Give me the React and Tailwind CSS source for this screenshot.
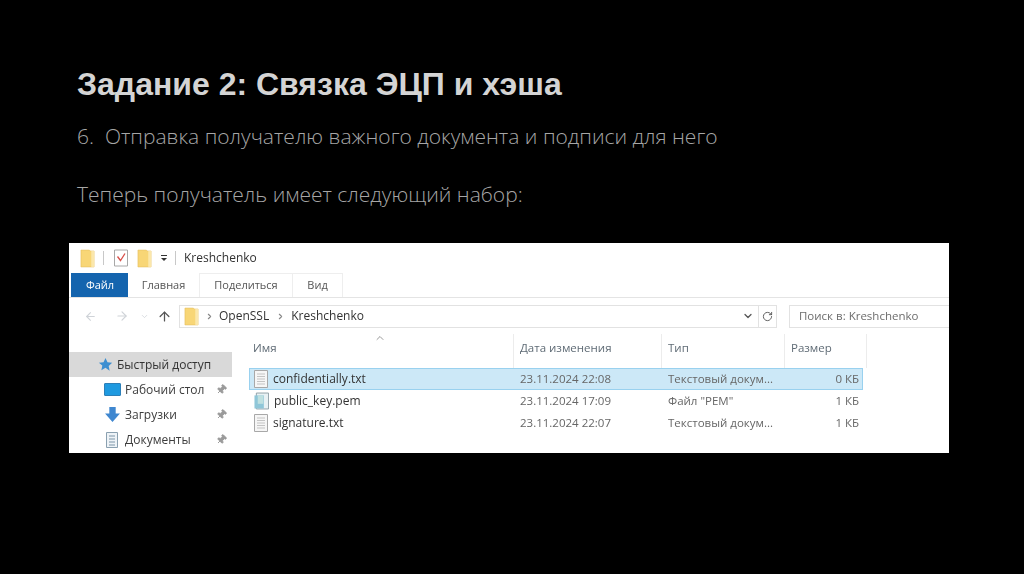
import { ArrowLeft, ArrowRight, ArrowUp, ChevronDown, ChevronRight, ChevronUp, RotateCw, Pin } from "lucide-react";

const sans = "font-['Open_Sans','Noto_Sans',sans-serif]";

function Folder({ className }) {
  return (
    <svg viewBox="0 0 16 20" className={className}>
      <path d="M1 1h9l1 1h4v17H1z" fill="#f8d676" stroke="#e4bd5c" strokeWidth="0.6" />
      <path d="M12 2h3v17h-3z" fill="#fbe7ab" />
    </svg>
  );
}

function TextFile() {
  return (
    <svg viewBox="0 0 14 18" className="h-[18px] w-[14px] shrink-0">
      <path d="M0.5 0.5h13v17h-13z" fill="#f6f6f6" stroke="#a8a8a8" />
      <path d="M3 4h8M3 6.5h8M3 9h8M3 11.5h8M3 14h8" stroke="#c4c4c4" />
    </svg>
  );
}

function PemFile() {
  return (
    <svg viewBox="0 0 16 18" className="h-[18px] w-[15px] shrink-0">
      <path d="M2.5 0.5h13v17h-13z" fill="#e8f1f4" stroke="#8f9ea5" />
      <path d="M0.5 3h10v14h-10z" fill="#8fc6d8" />
      <path d="M4 3h6v9H4z" fill="#bfe0e0" />
    </svg>
  );
}

const files = [
  { name: "confidentially.txt", date: "23.11.2024 22:08", type: "Текстовый докум...", size: "0 КБ", selected: true },
  { name: "public_key.pem", date: "23.11.2024 17:09", type: 'Файл "PEM"', size: "1 КБ", pem: true },
  { name: "signature.txt", date: "23.11.2024 22:07", type: "Текстовый докум...", size: "1 КБ" },
];

function NavItem({ icon, label }) {
  return (
    <div className="flex h-[25px] items-center pl-[31px] pr-1">
      <span className="flex w-[24px] shrink-0 justify-center">{icon}</span>
      <span className="ml-[1px] flex-1 text-[12px] text-[#3c3c3c]">{label}</span>
      <Pin size={11} className="mr-[1px] rotate-45 fill-[#9a9a9a] text-[#9a9a9a]" />
    </div>
  );
}

export default function App() {
  return (
    <div className={`h-[574px] w-[1024px] overflow-hidden bg-black ${sans}`}>
      <div className="px-[77px] pt-[65px]">
        <h1 className="font-['Liberation_Sans',sans-serif] text-[32px] leading-[38px] font-bold text-[#d4d4d4]">
          Задание 2: Связка ЭЦП и хэша
        </h1>
        <p className="mt-[19px] whitespace-pre text-[21px] leading-[28px] font-light text-[#a6a6a6]">
          6.  Отправка получателю важного документа и подписи для него
        </p>
        <p className="mt-[30px] text-[21px] leading-[28px] font-light text-[#a6a6a6]">
          Теперь получатель имеет следующий набор:
        </p>
      </div>

      <div className="mt-[35px] ml-[69px] h-[210px] w-[880px] overflow-hidden bg-white text-[#444] blur-[0.4px]">
        {/* title bar */}
        <div className="flex h-[30px] items-center pl-[11px]">
          <Folder className="h-[19px] w-[15px]" />
          <span className="ml-[8px] h-[14px] w-px bg-[#c8c8c8]" />
          <svg viewBox="0 0 14 17" className="ml-[10px] h-[18px] w-[14px]">
            <path d="M0.5 0.5h13v16h-13z" fill="#fff" stroke="#a8a8a8" />
            <path d="M3.5 7l3 4 4.5-7" fill="none" stroke="#d8504a" strokeWidth="1.3" />
          </svg>
          <Folder className="ml-[9px] h-[19px] w-[15px]" />
          <span className="ml-[7px] flex w-[10px] flex-col items-center gap-[2px]">
            <span className="h-px w-[6px] bg-[#333]" />
            <span className="h-0 w-0 border-x-[3px] border-t-[3px] border-x-transparent border-t-[#333]" />
          </span>
          <span className="ml-[6px] h-[14px] w-px bg-[#c8c8c8]" />
          <span className="ml-[8px] text-[12px] text-[#333]">Kreshchenko</span>
        </div>

        {/* ribbon tabs */}
        <div className="flex h-[25px] items-stretch border-b border-[#e4e4e4] pl-[2px] text-[11px]">
          <span className="flex w-[57px] items-center justify-center bg-[#1464ae] pl-[1px] text-white">Файл</span>
          <span className="flex w-[71px] items-center justify-center text-[#555]">Главная</span>
          <span className="flex w-[94px] items-center justify-center border-x border-t border-[#eeeeee] text-[#555]">Поделиться</span>
          <span className="flex w-[50px] items-center justify-center border-r border-t border-[#eeeeee] text-[#555]">Вид</span>
        </div>

        {/* address row */}
        <div className="flex h-[36px] items-center">
          <div className="flex w-[110px] shrink-0 items-center pl-[15px]">
            <ArrowLeft size={13} className="text-[#cfd3d8]" />
            <ArrowRight size={14} className="ml-[18px] text-[#cfd3d8]" />
            <ChevronDown size={9} className="ml-[11px] text-[#cfd3d8]" />
            <ArrowUp size={15} className="ml-[8px] text-[#555]" />
          </div>
          <div className="flex h-[23px] w-[598px] shrink-0 items-center border border-[#e2e2e2] pl-[4px]">
            <Folder className="h-[19px] w-[15px]" />
            <ChevronRight size={9} strokeWidth={3} className="ml-[6px] text-[#888]" />
            <span className="ml-[5px] text-[12px] text-[#333]">OpenSSL</span>
            <ChevronRight size={9} strokeWidth={3} className="ml-[7px] text-[#888]" />
            <span className="ml-[6px] text-[12px] text-[#333]">Kreshchenko</span>
            <ChevronDown size={12} strokeWidth={2.5} className="ml-auto mr-[4px] text-[#555]" />
            <span className="flex h-full w-[18px] items-center justify-center border-l border-[#e2e2e2]">
              <RotateCw size={11} className="text-[#555]" />
            </span>
          </div>
          <div className="ml-[12px] flex h-[23px] flex-1 items-center border-y border-l border-[#e2e2e2] pl-[9px] text-[11.5px] text-[#6d6d6d]">
            Поиск в: Kreshchenko
          </div>
        </div>

        {/* body */}
        <div className="flex">
          <div className="w-[163px] shrink-0 pt-[18px]">
            <div className="flex h-[25px] items-center bg-[#d9d9d9] pl-[29px]">
              <svg viewBox="0 0 16 16" className="h-[15px] w-[15px]">
                <path d="M8 1l2.100 4.600 5 .6-3.700 3.400 1 5L8 11.500l-4.400 2.600 1-5L.9 6.200l5-.6z" fill="#3d8fd1" />
              </svg>
              <span className="ml-[4px] text-[12px] text-[#333]">Быстрый доступ</span>
            </div>
            <NavItem
              label="Рабочий стол"
              icon={<span className="h-[13px] w-[17px] rounded-[1px] border border-[#2c7fb8] bg-[#1f9ae0]" />}
            />
            <NavItem
              label="Загрузки"
              icon={
                <svg viewBox="0 0 16 16" className="h-[17px] w-[17px]">
                  <path d="M5 1h6v6h4l-7 8-7-8h4z" fill="#3f87d0" />
                </svg>
              }
            />
            <NavItem
              label="Документы"
              icon={
                <svg viewBox="0 0 12 16" className="h-[16px] w-[12px]">
                  <path d="M.5.5h11v15H.5z" fill="#eef3f7" stroke="#8aa0b0" />
                  <path d="M3 4h6M3 7h6M3 10h6M3 13h6" stroke="#7d95a8" />
                </svg>
              }
            />
          </div>

          <div className="flex-1 pl-[17px]">
            <div className="relative flex h-[34px] text-[11.5px] text-[#5f6b75]">
              <ChevronUp size={12} className="absolute top-[-2px] left-[125px] text-[#9a9a9a]" />
              <span className="flex w-[265px] items-center border-r border-[#ececec] pb-[7px] pl-[4px]">Имя</span>
              <span className="flex w-[148px] items-center border-r border-[#ececec] pb-[7px] pl-[6px]">Дата изменения</span>
              <span className="flex w-[123px] items-center border-r border-[#ececec] pb-[7px] pl-[6px]">Тип</span>
              <span className="flex w-[82px] items-center border-r border-[#ececec] pb-[7px] pl-[6px]">Размер</span>
            </div>
            {files.map((file) => (
              <div
                key={file.name}
                className={`flex h-[22px] w-[614px] items-center border text-[11.5px] text-[#666] ${
                  file.selected ? "border-[#99d1ef] bg-[#cce8f7]" : "border-transparent"
                }`}
              >
                <span className="flex w-[263px] items-center gap-[5px] pl-[4px] text-[12px] text-[#333]">
                  {file.pem ? <PemFile /> : <TextFile />}
                  {file.name}
                </span>
                <span className="w-[148px] pl-[7px]">{file.date}</span>
                <span className="w-[123px] pl-[7px]">{file.type}</span>
                <span className="flex-1 pr-[3px] text-right">{file.size}</span>
              </div>
            ))}
          </div>
        </div>
      </div>
    </div>
  );
}
